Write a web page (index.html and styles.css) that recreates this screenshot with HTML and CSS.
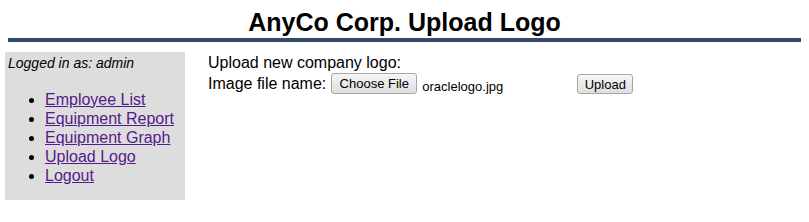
FILE: index.html
```html
<!DOCTYPE html>
<html>
<head>
<meta charset="utf-8">
<title>AnyCo Corp. Upload Logo</title>
<link rel="stylesheet" href="styles.css">
</head>
<body>
<header class="top">
  <h1 class="title">AnyCo Corp. Upload Logo</h1>
  <div class="rule"></div>
</header>
<div class="layout">
  <nav class="side">
    <div class="who">Logged in as: admin</div>
    <ul class="menu">
      <li><a href="#">Employee List</a></li>
      <li><a href="#">Equipment Report</a></li>
      <li><a href="#">Equipment Graph</a></li>
      <li><a href="#">Upload Logo</a></li>
      <li><a href="#">Logout</a></li>
    </ul>
  </nav>
  <main class="main">
    <div class="line">Upload new company logo:</div>
    <div class="line form-row">
      <span class="label">Image file name:</span>
      <span class="file">
        <span class="btn choose">Choose File</span>
        <span class="fname">oraclelogo.jpg</span>
      </span>
      <span class="btn upload">Upload</span>
    </div>
  </main>
</div>
</body>
</html>
```
FILE: styles.css
```css
html, body {
  margin: 0;
  padding: 0;
  background: #fff;
}
body {
  font-family: "Liberation Sans", Arial, sans-serif;
  font-size: 16px;
  color: #000;
}
.top {
  padding: 0 8px;
}
.title {
  margin: 0;
  padding-top: 8px;
  font-size: 25px;
  line-height: 29px;
  font-weight: bold;
  text-align: center;
}
.rule {
  margin-top: 1px;
  height: 4px;
  background: #334966;
}
.layout {
  display: flex;
  padding: 10px 0 0 5px;
  align-items: flex-start;
}
.side {
  width: 180px;
  height: 148px;
  box-sizing: border-box;
  background: #dddddd;
  padding: 3px 0 0 3px;
}
.who {
  font-style: italic;
  font-size: 14px;
  line-height: 16px;
}
.menu {
  margin: 19px 0 0 0;
  padding-left: 37px;
  line-height: 19px;
  font-size: 16px;
}
.menu a {
  color: #551a8b;
  text-decoration: underline;
}
.main {
  padding: 1px 0 0 23px;
}
.line {
  line-height: 19px;
}
.form-row {
  display: flex;
  align-items: center;
  margin-top: -1px;
}
.label {
  margin-right: 5px;
}
.file {
  display: inline-flex;
  align-items: center;
  width: 242px;
}
.btn {
  display: inline-block;
  box-sizing: border-box;
  font-size: 13px;
  line-height: 15px;
  padding: 2px 6px 2px;
  border: 1px solid #a6a6a6;
  border-radius: 3px;
  background: linear-gradient(#f6f6f6, #dedede);
  color: #000;
  text-align: center;
}
.choose {
  width: 86px;
  height: 21px;
}
.fname {
  font-size: 13px;
  margin-left: 5px;
  margin-top: 6px;
}
.upload {
  width: 56px;
  height: 20px;
  margin-left: 4px;
}
```
